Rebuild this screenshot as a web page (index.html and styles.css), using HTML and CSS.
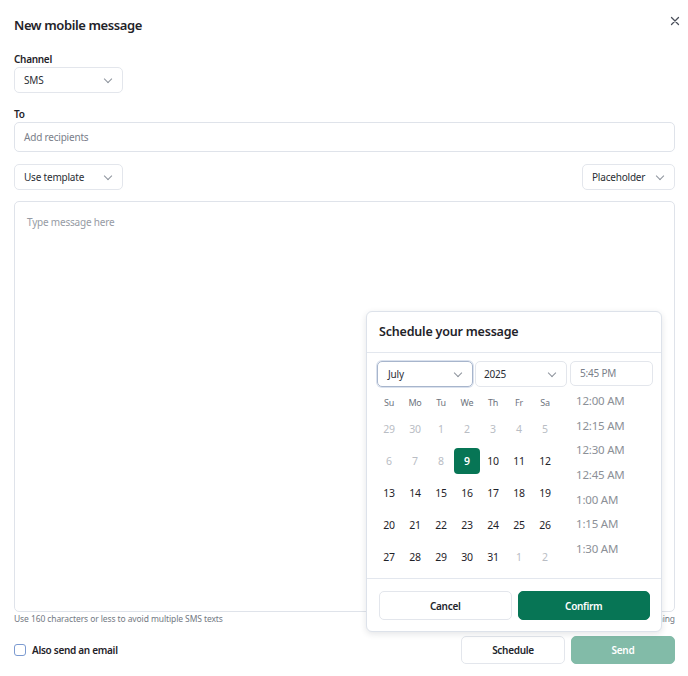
FILE: index.html
```html
<!DOCTYPE html>
<html>
<head>
<meta charset="UTF-8">
<link rel="stylesheet" href="styles.css">
</head>
<body>
<div class="modal">
  <div class="modal-head">
    <div class="title">New mobile message</div>
    <div class="close"><svg width="10" height="10" viewBox="0 0 10 10"><path d="M1.5 1.5l7 7M8.5 1.5l-7 7" stroke="#4a4f5a" stroke-width="1.3" stroke-linecap="round"/></svg></div>
  </div>

  <div class="label">Channel</div>
  <div class="select sel-channel"><span>SMS</span><i class="chev"></i></div>

  <div class="label label-to">To</div>
  <div class="input">Add recipients</div>

  <div class="tools">
    <div class="select sel-template"><span>Use template</span><i class="chev"></i></div>
    <div class="select sel-placeholder"><span>Placeholder</span><i class="chev"></i></div>
  </div>

  <div class="textarea">Type message here</div>
  <div class="helper">
    <span>Use 160 characters or less to avoid multiple SMS texts</span>
    <span>160 characters remaining</span>
  </div>

  <div class="footer">
    <label class="check"><span class="box"></span>Also send an email</label>
    <div class="actions">
      <button class="btn btn-light btn-schedule">Schedule</button>
      <button class="btn btn-send">Send</button>
    </div>
  </div>

  <div class="popover">
    <div class="pop-head">Schedule your message</div>
    <div class="pop-body">
      <div class="pickers">
        <div class="select sel-month"><span>July</span><i class="chev"></i></div>
        <div class="select sel-year"><span>2025</span><i class="chev"></i></div>
        <div class="time-input">5:45 PM</div>
      </div>
      <div class="cal-wrap">
        <div class="cal">
          <div class="wd">Su</div><div class="wd">Mo</div><div class="wd">Tu</div><div class="wd">We</div><div class="wd">Th</div><div class="wd">Fr</div><div class="wd">Sa</div>
          <div class="d off">29</div><div class="d off">30</div><div class="d off">1</div><div class="d off">2</div><div class="d off">3</div><div class="d off">4</div><div class="d off">5</div>
          <div class="d off">6</div><div class="d off">7</div><div class="d off">8</div><div class="d sel">9</div><div class="d">10</div><div class="d">11</div><div class="d">12</div>
          <div class="d">13</div><div class="d">14</div><div class="d">15</div><div class="d">16</div><div class="d">17</div><div class="d">18</div><div class="d">19</div>
          <div class="d">20</div><div class="d">21</div><div class="d">22</div><div class="d">23</div><div class="d">24</div><div class="d">25</div><div class="d">26</div>
          <div class="d">27</div><div class="d">28</div><div class="d">29</div><div class="d">30</div><div class="d">31</div><div class="d off">1</div><div class="d off">2</div>
        </div>
        <div class="times">
          <div>12:00 AM</div>
          <div>12:15 AM</div>
          <div>12:30 AM</div>
          <div>12:45 AM</div>
          <div>1:00 AM</div>
          <div>1:15 AM</div>
          <div>1:30 AM</div>
        </div>
      </div>
    </div>
    <div class="pop-foot">
      <button class="btn btn-light">Cancel</button>
      <button class="btn btn-confirm">Confirm</button>
    </div>
  </div>
</div>
</body>
</html>
```

FILE: styles.css
```css
body{margin:0;font-family:'Noto Sans',sans-serif;color:#1f2329;background:#fff;letter-spacing:-0.2px}
.modal{position:relative;padding:15px 13px 0 14px;height:676px;box-sizing:border-box}
.modal-head{display:flex;justify-content:space-between;align-items:flex-start;height:20px}
.title{font-size:13px;font-weight:600;line-height:20px;letter-spacing:-0.4px}
.close{margin-top:-6px;margin-right:-5px;width:10px;height:10px}
.label{font-size:10px;font-weight:600;line-height:16px;margin-top:16px;letter-spacing:-0.3px}
.label-to{margin-top:13px}
.select{display:flex;align-items:center;justify-content:space-between;box-sizing:border-box;height:26px;border:1px solid #e3e6ec;border-radius:5px;padding:0 11px 0 9px;font-size:10px;color:#2a2e35}
.chev{width:5px;height:5px;border-right:1px solid #8d939c;border-bottom:1px solid #8d939c;transform:rotate(45deg);margin-top:-3px}
.sel-channel{width:109px}
.input{box-sizing:border-box;height:30px;border:1px solid #dfe3ea;border-radius:5px;padding:0 9px;font-size:10px;line-height:28px;color:#7a808a}
.tools{display:flex;justify-content:space-between;margin-top:12px}
.sel-template{width:109px}
.sel-placeholder{width:93px}
.textarea{box-sizing:border-box;height:411px;margin-top:11px;border:1px solid #dfe3ea;border-radius:5px;padding:13px 12px;font-size:10px;color:#969ba4}
.helper{display:flex;justify-content:space-between;font-size:8.5px;line-height:14px;color:#737983;letter-spacing:-0.1px}
.footer{display:flex;justify-content:space-between;align-items:center;margin-top:10px}
.check{display:flex;align-items:center;font-size:10px;font-weight:600;letter-spacing:-0.3px}
.check .box{width:10px;height:10px;border:1.5px solid #7c9bd1;border-radius:3px;margin-right:6px}
.actions{display:flex;gap:6px}
.btn{font-family:inherit;font-size:10px;font-weight:600;letter-spacing:-0.3px;border-radius:5px;border:1px solid #e3e6ec;background:#fff;color:#22262c;height:28px;padding:0}
.btn-schedule{width:104px}
.btn-send{width:104px;background:#82bba8;border-color:#82bba8;color:#fff}
.popover{position:absolute;left:366px;top:311px;width:296px;height:321px;box-sizing:border-box;border:1px solid #dde2ea;border-radius:6px;background:#fff;box-shadow:0 2px 6px rgba(30,40,60,.12);display:flex;flex-direction:column}
.pop-head{height:41px;box-sizing:border-box;border-bottom:1px solid #e3e7ee;padding:0 12px;font-size:12.5px;font-weight:600;line-height:40px}
.pop-body{flex:1;padding:8px 8px 0 10px;border-bottom:1px solid #e3e7ee}
.pickers{display:flex;gap:2px}
.sel-month{width:96px;border-color:#a7b5cc;box-shadow:0 0 0 1px #dbe2ee;padding-left:10px}
.sel-year{width:92px;padding-left:8px}
.time-input{width:83px;margin-left:1px;box-sizing:border-box;height:25px;border:1px solid #e3e6ec;border-radius:5px;padding:0 9px;font-size:10px;line-height:23px;color:#7a808a}
.cal-wrap{display:flex;margin-top:4px}
.cal{display:grid;grid-template-columns:repeat(7,26px);grid-auto-rows:32px;grid-template-rows:22px;margin-left:-1px}
.wd{font-size:9px;color:#6e747e;display:flex;align-items:center;justify-content:center}
.d{font-size:10.5px;color:#1f2329;display:flex;align-items:center;justify-content:center;height:26px;margin-top:3px;border-radius:4px}
.d.off{color:#b9bdc4}
.d.sel{background:#077555;color:#fff;font-weight:600}
.times{margin-left:18px;margin-top:-2px;font-size:11.5px;color:#8c9097}
.times div{height:24.7px;line-height:24.7px}
.pop-foot{display:flex;gap:6px;padding:12px 11px 11px 12px}
.pop-foot .btn{flex:1;height:29px}
.btn-confirm{background:#077555;border-color:#077555;color:#fff}
```
